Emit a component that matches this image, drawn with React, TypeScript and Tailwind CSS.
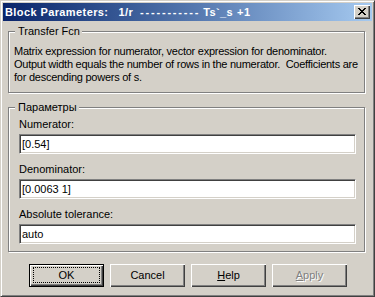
import React from "react";

function Group({ title, children, className }: { title: string; children: React.ReactNode; className?: string }) {
  return (
    <div
      className={`relative ml-[5px] mr-[7px] border border-[#808080] shadow-[inset_1px_1px_0_#fff,1px_1px_0_#fff] ${className ?? ""}`}
    >
      <span className="absolute left-[6px] top-[-7px] bg-[#d4d0c8] pl-[3px] pr-[2px] leading-[13px]">
        {title}
      </span>
      {children}
    </div>
  );
}

function Field({ label, value, className }: { label: string; value: string; className?: string }) {
  return (
    <div className={`flex flex-col ${className ?? ""}`}>
      <label className="h-[13px] leading-[13px]">{label}</label>
      <div className="mt-[3px] flex h-[20px] items-center border border-t-[#808080] border-l-[#808080] border-r-white border-b-white bg-white pl-[2px] shadow-[inset_1px_1px_0_#404040,inset_-1px_-1px_0_#d4d0c8]">
        {value}
      </div>
    </div>
  );
}

function Button({ children, isDefault, disabled }: { children: React.ReactNode; isDefault?: boolean; disabled?: boolean }) {
  return (
    <button
      type="button"
      className={`relative flex h-[23px] w-[75px] items-center justify-center bg-[#d4d0c8] ${
        isDefault
          ? "border border-black shadow-[inset_1px_1px_0_#fff,inset_-1px_-1px_0_#404040,inset_-2px_-2px_0_#808080]"
          : "shadow-[inset_1px_1px_0_#fff,inset_-1px_-1px_0_#404040,inset_-2px_-2px_0_#808080]"
      } ${disabled ? "text-[#808080] [text-shadow:1px_1px_0_#fff]" : "text-black"}`}
    >
      {isDefault && (
        <span className="absolute left-[3px] right-[3px] top-[2px] bottom-[3px] border border-dotted border-black" />
      )}
      {children}
    </button>
  );
}

export default function App() {
  return (
    <div className="flex h-[297px] w-[375px] flex-col border border-t-[#d4d0c8] border-l-[#d4d0c8] border-r-[#404040] border-b-[#404040] bg-[#d4d0c8] p-[2px] font-['Liberation_Sans',Arial,sans-serif] text-[11px] text-black shadow-[inset_1px_1px_0_#fff,inset_-1px_-1px_0_#808080]">
      <div className="flex h-[18px] items-center bg-gradient-to-r from-[#0a246a] to-[#a6caf0] pl-[2px] pr-[2px]">
        <div className="flex items-center whitespace-nowrap font-bold tracking-[0.4px] text-white">
          <span>Block Parameters:</span>
          <span className="ml-[10px]">1/r</span>
          <span className="ml-[7px] tracking-[1.8px]">-----------</span>
          <span className="ml-[3px]">Ts`_s</span>
          <span className="ml-[4px]">+1</span>
        </div>
        <div className="ml-auto flex h-[14px] w-[16px] items-center justify-center bg-[#d4d0c8] shadow-[inset_1px_1px_0_#fff,inset_-1px_-1px_0_#404040,inset_-2px_-2px_0_#808080]">
          <svg width="8" height="7" viewBox="0 0 8 7" className="mb-[1px]">
            <path d="M0 0h2v1h1v1h2V1h1V0h2v1H7v1H6v1H5v1h1v1h1v1h1v1H6V6H5V5H3v1H2v1H0V6h1V5h1V4h1V3H2V2H1V1H0z" fill="#000" />
          </svg>
        </div>
      </div>

      <Group title="Transfer Fcn" className="mt-[10px] h-[62px]">
        <p className="whitespace-nowrap pl-[5px] pt-[13px] leading-[13px] tracking-[-0.25px]">
          Matrix expression for numerator, vector expression for denominator.
          <br />
          Output width equals the number of rows in the numerator.&nbsp; Coefficients are
          <br />
          for descending powers of s.
        </p>
      </Group>

      <Group title="Параметры" className="mt-[14px] h-[145px]">
        <div className="flex flex-col pl-[10px] pr-[8px] pt-[10px]">
          <Field label="Numerator:" value="[0.54]" />
          <Field label="Denominator:" value="[0.0063 1]" className="mt-[9px]" />
          <Field label="Absolute tolerance:" value="auto" className="mt-[9px]" />
        </div>
      </Group>

      <div className="mt-[12px] flex gap-[6px] pl-[26px]">
        <Button isDefault>OK</Button>
        <Button>Cancel</Button>
        <Button>
          <span>
            <u>H</u>elp
          </span>
        </Button>
        <Button disabled>
          <span>
            <u>A</u>pply
          </span>
        </Button>
      </div>
    </div>
  );
}
